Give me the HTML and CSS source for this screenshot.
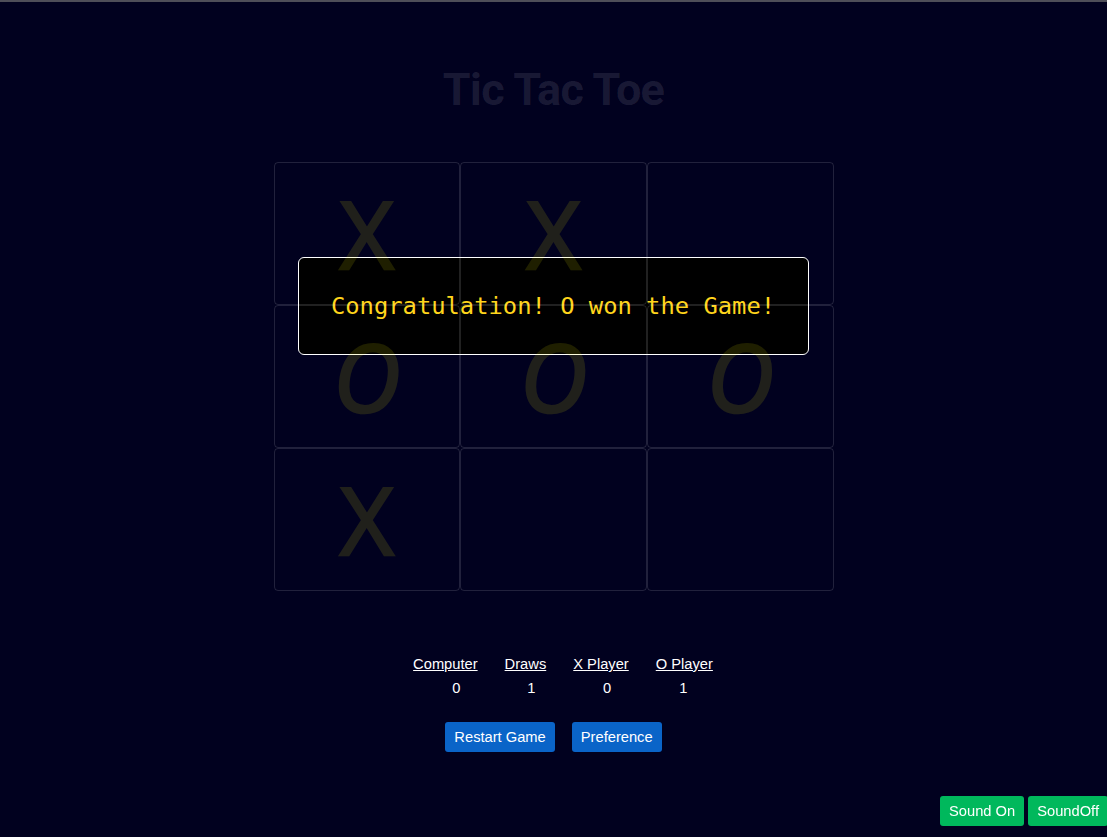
FILE: index.html
```html
<!DOCTYPE html>
<html lang="en">
<head>
<meta charset="utf-8">
<title>Tic Tac Toe</title>
<link rel="stylesheet" href="styles.css">
</head>
<body>
<main class="app">
  <h1 class="title">Tic Tac Toe</h1>
  <div class="board-wrap">
    <div class="message">Congratulation! O won the Game!</div>
    <div class="board">
      <div class="cell"><span class="mark">X</span></div>
      <div class="cell"><span class="mark">X</span></div>
      <div class="cell"></div>
      <div class="cell"><span class="mark o">O</span></div>
      <div class="cell"><span class="mark o">O</span></div>
      <div class="cell"><span class="mark o">O</span></div>
      <div class="cell"><span class="mark">X</span></div>
      <div class="cell"></div>
      <div class="cell"></div>
    </div>
  </div>
  <div class="scores">
    <div class="stat"><span class="label">Computer</span><span class="value v1">0</span></div>
    <div class="stat"><span class="label">Draws</span><span class="value v2">1</span></div>
    <div class="stat"><span class="label">X Player</span><span class="value v3">0</span></div>
    <div class="stat"><span class="label">O Player</span><span class="value v4">1</span></div>
  </div>
  <div class="actions">
    <button class="btn btn-blue">Restart Game</button>
    <button class="btn btn-blue">Preference</button>
  </div>
</main>
<div class="sound">
  <button class="btn btn-green">Sound On</button>
  <button class="btn btn-green">SoundOff</button>
</div>
</body>
</html>
```
FILE: styles.css
```css
html, body {
  margin: 0;
  padding: 0;
  height: 100%;
}
body {
  background: #01011f;
  border-top: 2px solid #4e4e58;
  box-sizing: border-box;
  font-family: "Liberation Sans", Arial, sans-serif;
  color: #ffffff;
  overflow: hidden;
}
.app {
  display: flex;
  flex-direction: column;
  align-items: center;
  padding-top: 62px;
}
.title {
  margin: 0;
  font-family: Roboto, "Liberation Sans", sans-serif;
  font-weight: 700;
  font-size: 45px;
  line-height: 52px;
  letter-spacing: -0.7px;
  color: rgba(255, 255, 255, 0.1);
}
.board-wrap {
  position: relative;
  margin-top: 46px;
}
.board {
  position: relative;
  z-index: 1;
  display: grid;
  grid-template-columns: repeat(3, 1fr);
  grid-template-rows: repeat(3, 143px);
  width: 560px;
}
.cell {
  border: 1px solid rgba(255, 255, 255, 0.13);
  border-radius: 4px;
  display: flex;
  align-items: center;
  justify-content: center;
  background: transparent;
}
.mark {
  font-family: "Open Sans", "DejaVu Sans", sans-serif;
  font-weight: 400;
  font-size: 93px;
  color: #ffff00;
  -webkit-text-stroke: 2.5px #ffff00;
  opacity: 0.12;
  line-height: 1;
}
.mark.o {
  font-style: italic;
}
.message {
  position: absolute;
  z-index: 0;
  top: 95px;
  left: 24px;
  width: 511px;
  height: 98px;
  box-sizing: border-box;
  background: #000000;
  border: 1px solid #ffffff;
  border-radius: 6px;
  display: flex;
  align-items: center;
  justify-content: center;
  font-family: "DejaVu Sans Mono", "Liberation Mono", monospace;
  font-size: 23.8px;
  color: #ffd51c;
}
.scores {
  display: flex;
  gap: 27px;
  margin-top: 65px;
  margin-left: 19px;
  font-size: 14.7px;
}
.stat {
  display: flex;
  flex-direction: column;
  gap: 8px;
}
.label {
  text-decoration: underline;
}
.value {
  text-align: center;
}
.v1 { padding-left: 22px; }
.v2 { padding-left: 12px; }
.v3 { padding-left: 12px; }
.v4 { padding-right: 2px; }
.actions {
  display: flex;
  gap: 17px;
  margin-top: 26px;
}
.btn {
  font-family: "Liberation Sans", Arial, sans-serif;
  font-size: 14.7px;
  color: #ffffff;
  border: none;
  border-radius: 3px;
  height: 30px;
  padding: 0 9px;
  cursor: pointer;
}
.btn-blue {
  background: #0a64c8;
}
.btn-green {
  background: #00b85c;
}
.sound {
  position: fixed;
  right: -1px;
  bottom: 11px;
  display: flex;
  gap: 4px;
}
```
